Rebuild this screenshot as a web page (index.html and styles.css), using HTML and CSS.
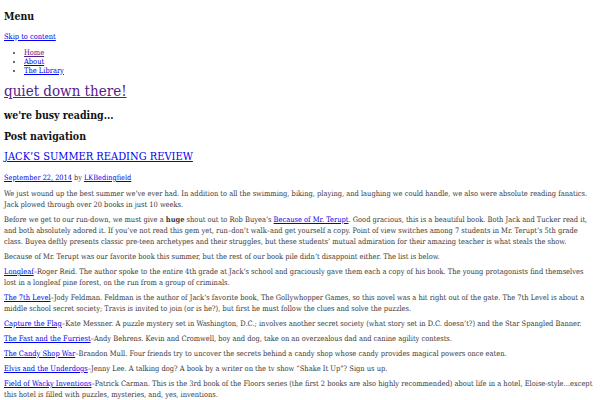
FILE: index.html
```html
<!DOCTYPE html>
<html>
<head>
<meta charset="utf-8">
<link rel="stylesheet" href="styles.css">
</head>
<body>
<div class="site">
  <header class="masthead">
    <h2 class="menu-toggle">Menu</h2>
    <a class="skip-link" href="#content">Skip to content</a>
    <ul class="nav-menu">
      <li><a class="visited" href="#">Home</a></li>
      <li><a href="#">About</a></li>
      <li><a href="#">The Library</a></li>
    </ul>
    <h1 class="site-title"><a class="visited" href="#">quiet down there!</a></h1>
    <h2 class="site-description">we're busy reading...</h2>
  </header>
  <main id="content">
    <h2 class="nav-title">Post navigation</h2>
    <article class="post">
      <h1 class="entry-title"><a href="#">JACK’S SUMMER READING REVIEW</a></h1>
      <div class="entry-meta"><a href="#">September 22, 2014</a> by <a href="#">LKBedingfield</a></div>
      <div class="entry-content">
        <p>We just wound up the best summer we’ve ever had. In addition to all the swimming, biking, playing, and laughing we could handle, we also were absolute reading fanatics.<br>Jack plowed through over 20 books in just 10 weeks.</p>
        <p>Before we get to our run-down, we must give a <strong>huge</strong> shout out to Rob Buyea’s <a href="#">Because of Mr. Terupt</a>. Good gracious, this is a beautiful book. Both Jack and Tucker read it,<br>and both absolutely adored it. If you’ve not read this gem yet, run–don’t walk–and get yourself a copy. Point of view switches among 7 students in Mr. Terupt’s 5th grade<br>class. Buyea deftly presents classic pre-teen archetypes and their struggles, but these students’ mutual admiration for their amazing teacher is what steals the show.</p>
        <p>Because of Mr. Terupt was our favorite book this summer, but the rest of our book pile didn’t disappoint either. The list is below.</p>
        <p><a href="#">Longleaf</a>–Roger Reid. The author spoke to the entire 4th grade at Jack’s school and graciously gave them each a copy of his book. The young protagonists find themselves<br>lost in a longleaf pine forest, on the run from a group of criminals.</p>
        <p><a href="#">The 7th Level</a>–Jody Feldman. Feldman is the author of Jack’s favorite book, The Gollywhopper Games, so this novel was a hit right out of the gate. The 7th Level is about a<br>middle school secret society; Travis is invited to join (or is he?), but first he must follow the clues and solve the puzzles.</p>
        <p><a href="#">Capture the Flag</a>–Kate Messner. A puzzle mystery set in Washington, D.C.; involves another secret society (what story set in D.C. doesn’t?) and the Star Spangled Banner.</p>
        <p><a href="#">The Fast and the Furriest</a>–Andy Behrens. Kevin and Cromwell, boy and dog, take on an overzealous dad and canine agility contests.</p>
        <p><a href="#">The Candy Shop War</a>–Brandon Mull. Four friends try to uncover the secrets behind a candy shop whose candy provides magical powers once eaten.</p>
        <p><a href="#">Elvis and the Underdogs</a>–Jenny Lee. A talking dog? A book by a writer on the tv show “Shake It Up”? Sign us up.</p>
        <p><a href="#">Field of Wacky Inventions</a>–Patrick Carman. This is the 3rd book of the Floors series (the first 2 books are also highly recommended) about life in a hotel, Eloise-style...except<br>this hotel is filled with puzzles, mysteries, and, yes, inventions.</p>
      </div>
    </article>
  </main>
</div>
</body>
</html>
```
FILE: styles.css
```css
html, body {
  margin: 0;
  padding: 0;
  background: #ffffff;
}
body {
  font-family: "DejaVu Serif Condensed", "DejaVu Serif", serif;
  font-stretch: semi-condensed;
  font-size: 7.45px;
  line-height: 11px;
  color: #3a3a3a;
}
.site {
  padding: 4px 4px;
}
a {
  color: #0000ee;
  text-decoration: underline;
}
a.visited {
  color: #551a8b;
}
h1, h2 {
  color: #111111;
  font-weight: bold;
  margin: 0;
}
.menu-toggle {
  font-size: 10.5px;
  line-height: 16px;
  margin-top: 4px;
}
.skip-link {
  display: inline-block;
  margin-top: 7px;
}
.nav-menu {
  margin: 6px 0 0 0;
  padding-left: 20px;
  line-height: 9px;
}
.site-title {
  font-size: 15px;
  font-weight: normal;
  line-height: 20px;
  margin-top: 6px;
}
.site-description {
  font-size: 10.5px;
  line-height: 16px;
  margin-top: 6px;
}
.nav-title {
  font-size: 10.5px;
  line-height: 16px;
  margin-top: 5px;
}
.entry-title {
  font-size: 11px;
  font-weight: normal;
  line-height: 18px;
  margin-top: 4px;
}
.entry-meta {
  font-size: 7.3px;
  margin-top: 6px;
}
.entry-content p {
  margin: 4px 0 0 0;
}
.entry-content p:first-child {
  margin-top: 5px;
}
```
